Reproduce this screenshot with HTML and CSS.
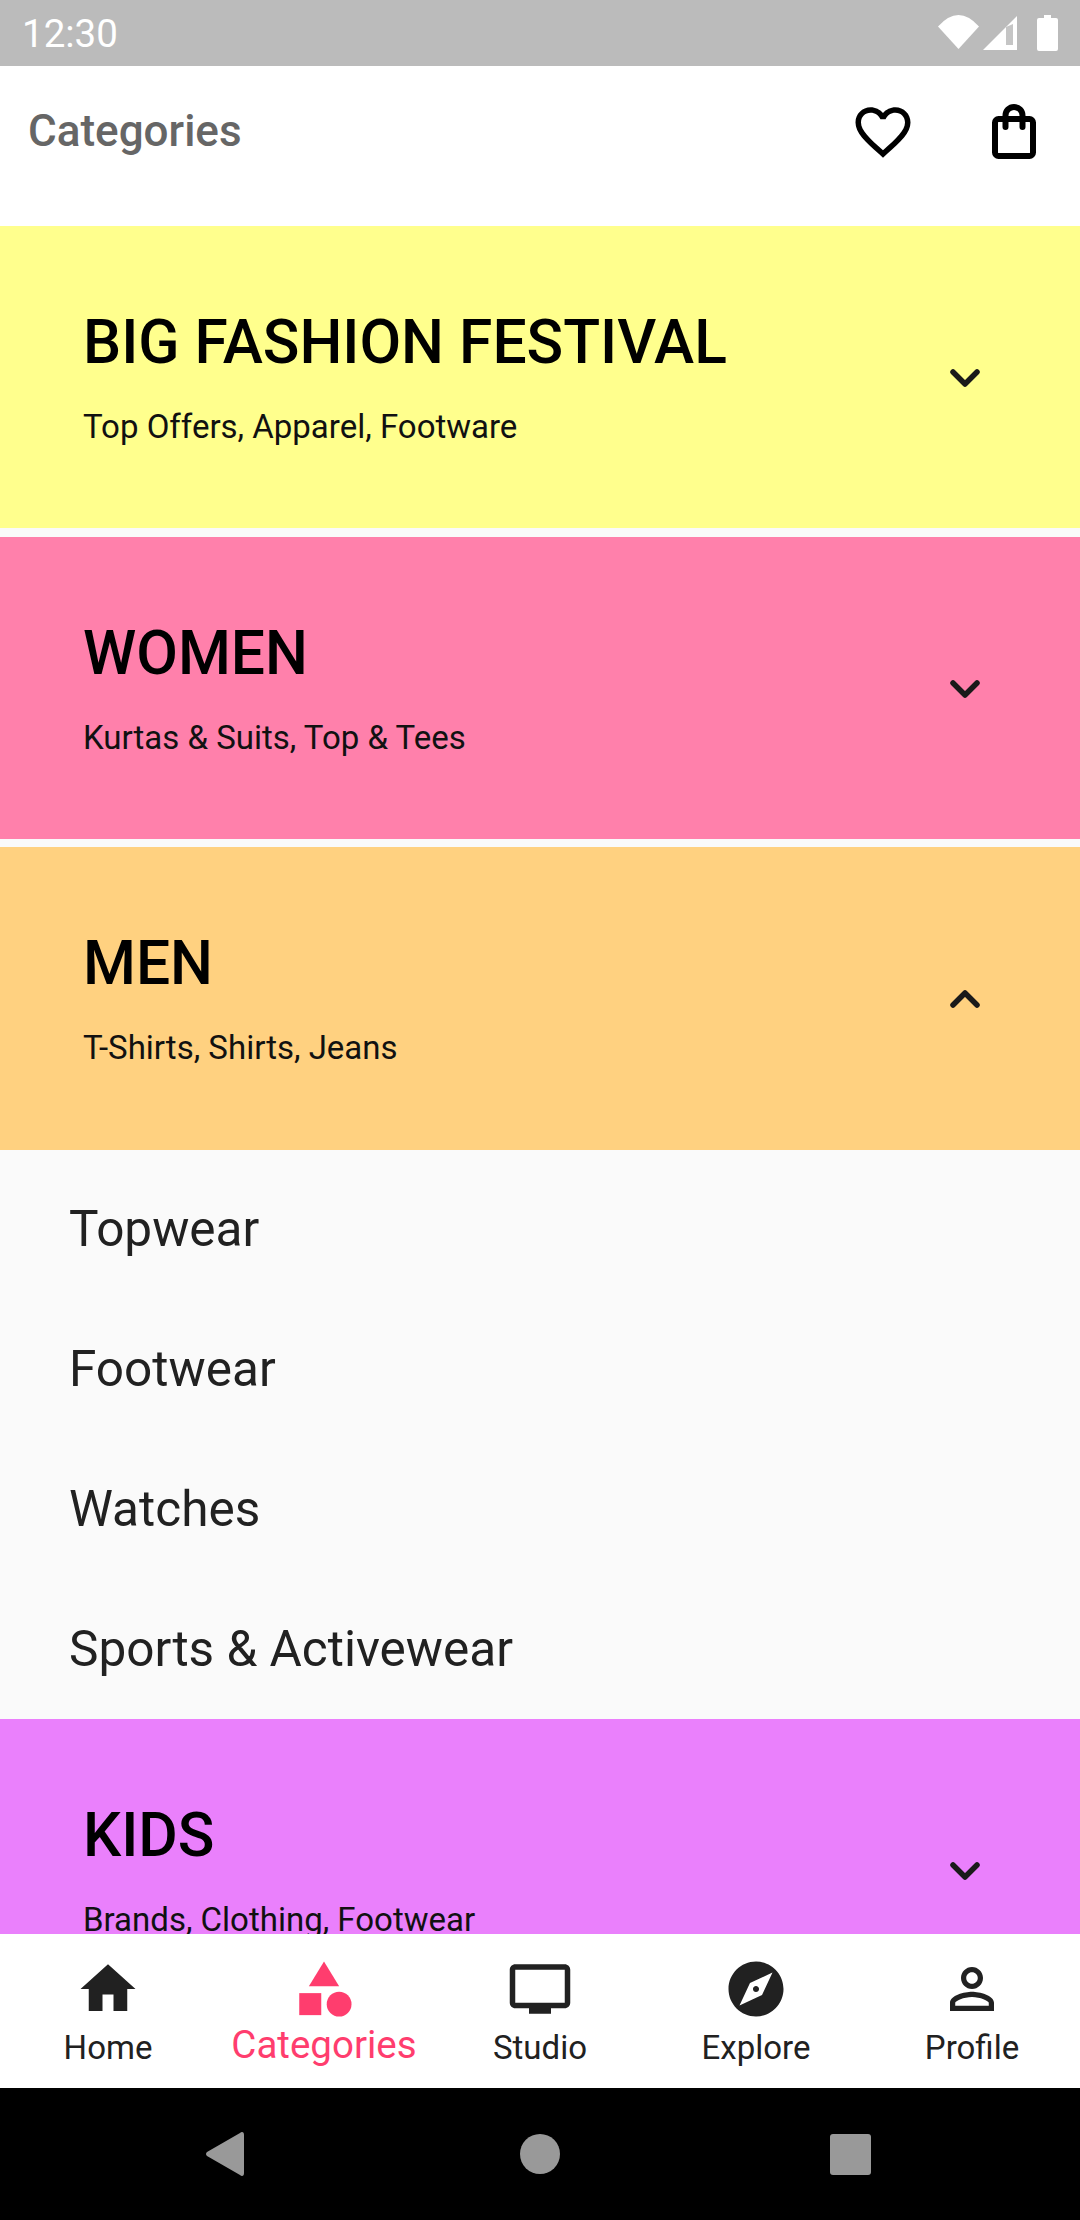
FILE: index.html
```html
<!DOCTYPE html>
<html lang="en">
<head>
<meta charset="utf-8">
<title>Categories</title>
<link rel="stylesheet" href="styles.css">
</head>
<body>
<div class="screen">
  <div class="status">
    <span class="time">12:30</span>
    <div class="status-icons">
      <svg class="s-wifi" viewBox="0 0 41 34"><path d="M0 11.500Q20.500-11.500 41 11.500L20.500 34Z" fill="#fff"/></svg>
      <svg class="s-signal" viewBox="0 0 34 34"><path d="M0 34L34 0V34Z" fill="#fff"/><path d="M23 11V29H30V8Z" fill="#bbb" opacity=".85"/></svg>
      <svg class="s-batt" viewBox="0 0 21 36"><path d="M7 0H14V3H19Q21 3 21 5V34Q21 36 19 36H2Q0 36 0 34V5Q0 3 2 3H7Z" fill="#fff"/></svg>
    </div>
  </div>
  <header class="top">
    <h1 class="page-title">Categories</h1>
    <svg class="heart" viewBox="0 0 24 24"><path d="M16.500 3c-1.740 0-3.410.810-4.500 2.090C10.910 3.810 9.240 3 7.500 3 4.420 3 2 5.420 2 8.500c0 3.780 3.400 6.860 8.550 11.540L12 21.350l1.450-1.320C18.600 15.360 22 12.280 22 8.500 22 5.420 19.580 3 16.500 3zm-4.400 15.550l-.1.100-.1-.100C7.140 14.240 4 11.390 4 8.500 4 6.500 5.500 5 7.500 5c1.540 0 3.040.990 3.570 2.360h1.870C13.460 5.990 14.960 5 16.500 5c2 0 3.500 1.500 3.500 3.500 0 2.890-3.140 5.740-7.900 10.050z"/></svg>
    <svg class="bag" viewBox="0 0 44 55"><rect x="3" y="15" width="38" height="37" rx="3.500"/><path d="M13.500 23V11.500a8.500 8.500 0 0 1 17 0V23"/></svg>
  </header>
  <main class="content">
    <section class="card card-yellow">
      <div class="card-text"><h2 class="card-title">BIG FASHION FESTIVAL</h2><p class="card-sub">Top Offers, Apparel, Footware</p></div>
      <svg class="chev" viewBox="0 0 30 18"><path d="M3 3L15 15L27 3"/></svg>
    </section>
    <section class="card card-pink">
      <div class="card-text"><h2 class="card-title">WOMEN</h2><p class="card-sub">Kurtas &amp; Suits, Top &amp; Tees</p></div>
      <svg class="chev" viewBox="0 0 30 18"><path d="M3 3L15 15L27 3"/></svg>
    </section>
    <section class="card card-orange">
      <div class="card-text"><h2 class="card-title">MEN</h2><p class="card-sub">T-Shirts, Shirts, Jeans</p></div>
      <svg class="chev" viewBox="0 0 30 18"><path d="M3 15L15 3L27 15"/></svg>
    </section>
    <ul class="sublist">
      <li>Topwear</li>
      <li>Footwear</li>
      <li>Watches</li>
      <li>Sports &amp; Activewear</li>
    </ul>
    <section class="card card-purple">
      <div class="card-text"><h2 class="card-title">KIDS</h2><p class="card-sub">Brands, Clothing, Footwear</p></div>
      <svg class="chev" viewBox="0 0 30 18"><path d="M3 3L15 15L27 3"/></svg>
    </section>
  </main>
  <nav class="tabs">
    <div class="tab">
      <svg class="tab-icon" viewBox="0 0 24 24"><path d="M10 20v-6h4v6h5v-8h3L12 3 2 12h3v8z"/></svg>
      <span class="tab-label">Home</span>
    </div>
    <div class="tab tab-active">
      <svg class="tab-icon" viewBox="0 0 24 24"><path d="M12 2l-5.500 9h11z"/><circle cx="17.500" cy="17.500" r="4.500"/><rect x="3" y="13.500" width="8" height="8"/></svg>
      <span class="tab-label">Categories</span>
    </div>
    <div class="tab">
      <svg class="tab-icon" viewBox="0 0 24 24"><path d="M21 3H3c-1.100 0-2 .900-2 2v12c0 1.100.900 2 2 2h5v2h8v-2h5c1.100 0 2-.900 2-2V5c0-1.100-.900-2-2-2zm0 14H3V5h18v12z"/></svg>
      <span class="tab-label">Studio</span>
    </div>
    <div class="tab">
      <svg class="tab-icon" viewBox="0 0 24 24"><path d="M12 10.900c-.610 0-1.100.490-1.100 1.100s.490 1.100 1.100 1.100c.610 0 1.100-.490 1.100-1.100s-.490-1.100-1.100-1.100zM12 2C6.480 2 2 6.480 2 12s4.480 10 10 10 10-4.480 10-10S17.520 2 12 2zm2.190 12.190L6 18l3.810-8.190L18 6l-3.810 8.190z"/></svg>
      <span class="tab-label">Explore</span>
    </div>
    <div class="tab">
      <svg class="tab-icon" viewBox="0 0 24 24"><path d="M12 5.900c1.160 0 2.100.940 2.100 2.100s-.940 2.100-2.100 2.100S9.900 9.160 9.900 8s.940-2.100 2.100-2.100m0 9c2.970 0 6.100 1.460 6.100 2.100v1.100H5.900V17c0-.640 3.130-2.100 6.100-2.100M12 4C9.790 4 8 5.790 8 8s1.790 4 4 4 4-1.790 4-4-1.790-4-4-4zm0 9c-2.670 0-8 1.340-8 4v3h16v-3c0-2.660-5.330-4-8-4z"/></svg>
      <span class="tab-label">Profile</span>
    </div>
  </nav>
  <div class="sysnav">
    <svg class="sys-back" viewBox="0 0 38 44"><path d="M36 0Q38 0 38 3V41Q38 44 36 44Q35 44 34 43L1 24Q-1 22 1 20L34 1Q35 0 36 0Z"/></svg>
    <svg class="sys-home" viewBox="0 0 40 40"><circle cx="20" cy="20" r="20"/></svg>
    <svg class="sys-recent" viewBox="0 0 41 41"><rect width="41" height="41" rx="3"/></svg>
  </div>
</div>
</body>
</html>
```
FILE: styles.css
```css
* { box-sizing: border-box; }
html, body { margin: 0; padding: 0; }
body { width: 1080px; height: 2220px; overflow: hidden; font-family: Roboto, "Liberation Sans", sans-serif; background: #fafafa; }
.screen { width: 1080px; height: 2220px; display: flex; flex-direction: column; }

.status { flex: 0 0 66px; background: #bbbbbb; display: flex; align-items: center; justify-content: space-between; padding: 0 22px 0 22px; }
.time { color: #fff; font-size: 38.500px; }
.status-icons { display: flex; align-items: flex-start; margin-top: -1px; }
.s-wifi { width: 41px; height: 34px; }
.s-signal { width: 34px; height: 34px; margin: 1px 20px 0 4px; }
.s-batt { width: 21px; height: 36px; }

.top { flex: 0 0 160px; background: #fff; display: flex; align-items: flex-start; padding: 33px 44px 0 28px; }
.page-title { margin: 9px auto 0 0; font-size: 44px; line-height: 46px; font-weight: 500; color: #666666; }
.heart { width: 66px; height: 66px; fill: #000; margin-right: 76px; }
.bag { width: 44px; height: 55px; margin-top: 5px; fill: none; stroke: #000; stroke-width: 6; stroke-linejoin: round; stroke-linecap: round; }

.content { flex: 1 1 0; min-height: 0; overflow: hidden; background: #fafafa; }
.card { height: 302.350px; margin-bottom: 8.300px; display: flex; align-items: flex-start; justify-content: space-between; padding: 0 100px 0 83px; }
.card-yellow { background: #ffff8d; }
.card-pink { background: #ff80ab; }
.card-orange { background: #ffd180; margin-bottom: 0; }
.card-purple { background: #ea80fc; margin-bottom: 0; }
.card-text { padding-top: 81px; }
.card-title { margin: 0; font-size: 60.500px; line-height: 72px; font-weight: 500; color: #000; }
.card-sub { margin: 29px 0 0; font-size: 33px; line-height: 38px; color: #111; }
.chev { width: 30px; height: 18px; margin-top: 143px; fill: none; stroke: #1a1a1a; stroke-width: 5.500; stroke-linecap: round; stroke-linejoin: round; }

.sublist { list-style: none; margin: 0; padding: 9.500px 0 0 69px; height: 569.700px; background: #fafafa; }
.sublist li { height: 140px; display: flex; align-items: center; font-size: 49.500px; color: #212121; }

.tabs { flex: 0 0 154px; background: #fff; display: grid; grid-template-columns: repeat(5, 216px); }
.tab { display: flex; flex-direction: column; align-items: center; padding-top: 22px; color: #212121; }
.tab-icon { width: 66px; height: 66px; fill: currentColor; }
.tab-label { font-size: 33px; line-height: 44px; margin-top: 4px; }
.tab-active { color: #ff3d6e; }
.tab-active .tab-label { font-size: 38.500px; margin-top: 1px; }

.sysnav { flex: 0 0 132px; background: #000; display: flex; align-items: center; justify-content: center; padding-right: 2.500px; }
.sysnav svg { fill: #999999; }
.sys-back { width: 38px; height: 44px; margin-right: 275.500px; }
.sys-home { width: 40px; height: 40px; }
.sys-recent { width: 41px; height: 41px; margin-left: 270.500px; }
```
